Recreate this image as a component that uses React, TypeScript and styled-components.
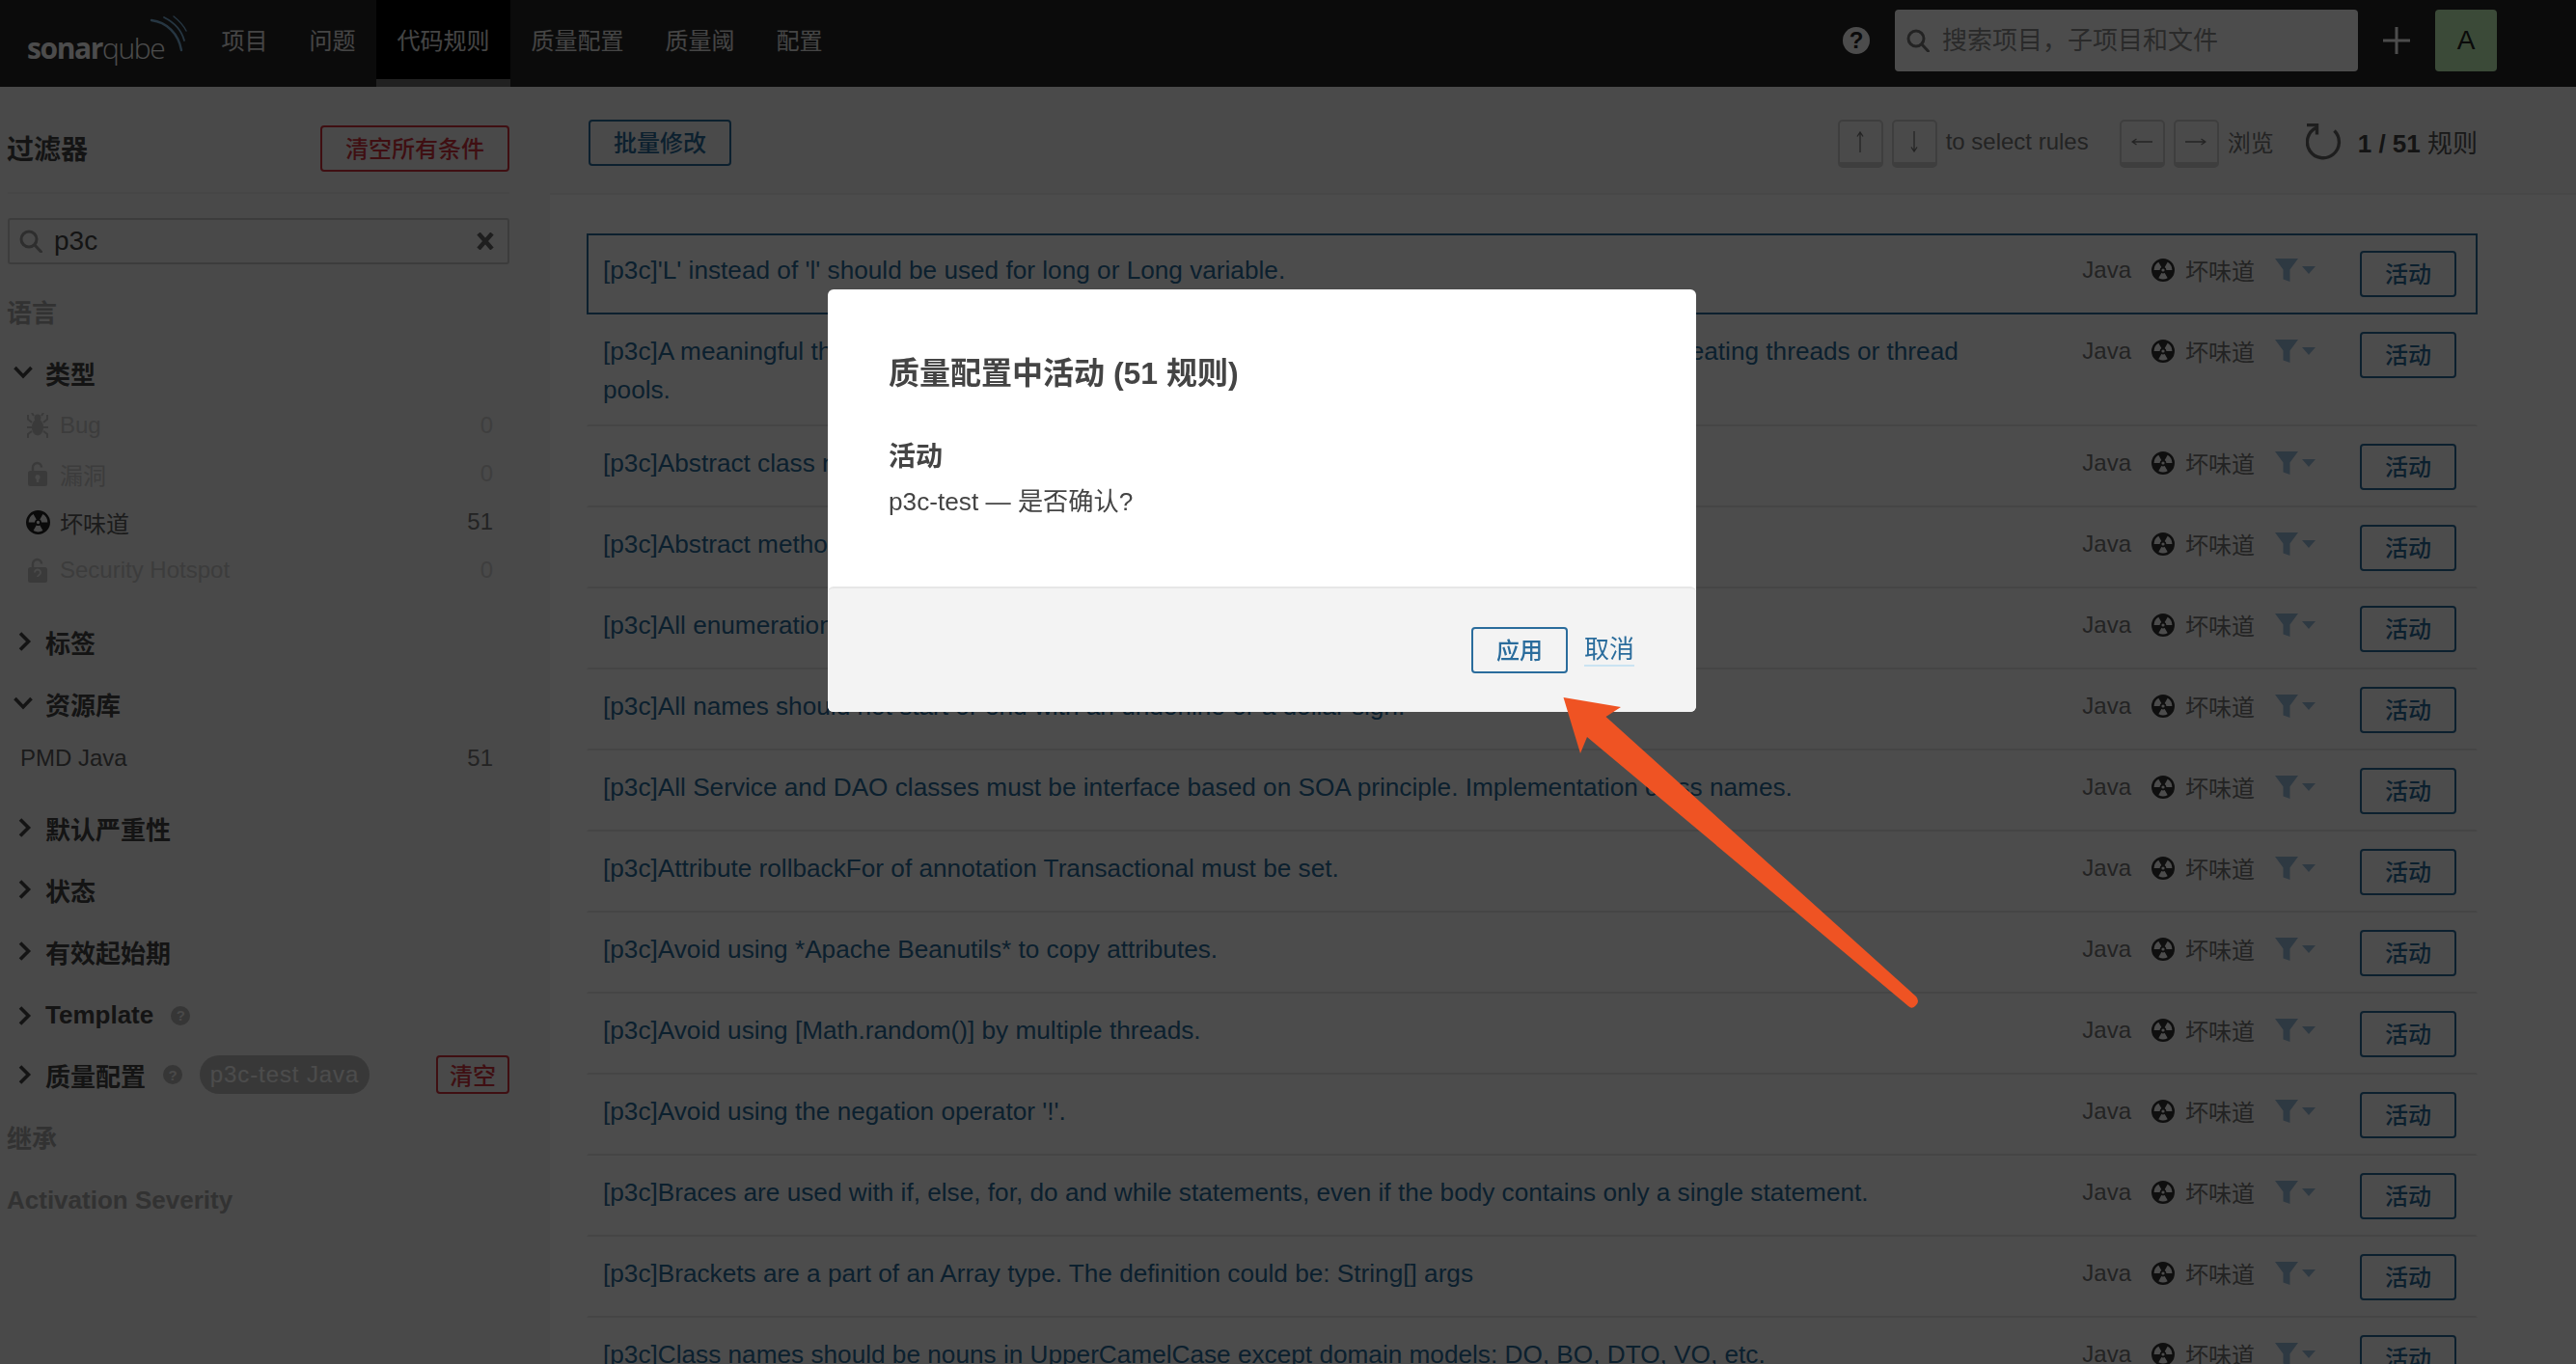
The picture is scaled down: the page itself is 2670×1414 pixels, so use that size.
import React from "react";
import styled, { createGlobalStyle } from "styled-components";

const FONT = `"Liberation Sans", "Noto Sans CJK SC", sans-serif`;
const BLUE = "#2a6c9c";

const GlobalStyle = createGlobalStyle`
  html, body { margin: 0; padding: 0; height: 100%; overflow: hidden; background: #fff; }
  body { font-family: ${FONT}; color: #444; }
  * { box-sizing: border-box; }
`;

const Page = styled.div`
  height: 1414px;
  overflow: hidden;
  display: flex;
  flex-direction: column;
`;

/* ---------- top bar ---------- */
const TopBar = styled.header`
  height: 90px;
  flex: none;
  display: flex;
  align-items: stretch;
  background: #262626;
  padding: 0 82px 0 28px;
`;
const Logo = styled.div`
  position: relative;
  width: 180px;
  display: flex;
  align-items: center;
  padding-top: 8px;
  font-family: "Open Sans", ${FONT};
  font-size: 30px;
  letter-spacing: -1.4px;
  color: #fff;
  b { font-weight: 700; }
  span { font-weight: 300; }
  svg { position: absolute; left: 124px; top: 14px; }
`;
const Nav = styled.nav`
  display: flex;
`;
const NavItem = styled.a<{ $active?: boolean }>`
  height: 90px;
  display: flex;
  align-items: center;
  padding: 0 21.5px 2px;
  font-size: 24px;
  color: #e6e6e6;
  background: ${(p) => (p.$active ? "#000" : "transparent")};
  border-bottom: 8px solid ${(p) => (p.$active ? "#707070" : "transparent")};
`;
const TopRight = styled.div`
  margin-left: auto;
  display: flex;
  align-items: center;
  padding-bottom: 6px;
`;
const HelpBig = styled.span`
  width: 28px;
  height: 28px;
  border-radius: 50%;
  background: #fff;
  color: #262626;
  font-size: 24px;
  font-weight: 700;
  display: flex;
  align-items: center;
  justify-content: center;
  margin-right: 26px;
`;
const GlobalSearch = styled.div`
  width: 480px;
  height: 64px;
  background: #fff;
  border-radius: 4px;
  display: flex;
  align-items: center;
  padding: 0 12px;
  gap: 13px;
  color: #777;
`;
const GlobalInput = styled.input`
  flex: 1;
  min-width: 0;
  border: 0;
  outline: 0;
  padding: 0;
  background: transparent;
  font: 26px ${FONT};
  &::placeholder { color: #8e8e8e; opacity: 1; }
`;
const PlusButton = styled.div`
  margin: 0 26px;
  display: flex;
  color: #fff;
`;
const Avatar = styled.div`
  width: 64px;
  height: 64px;
  border-radius: 4px;
  background: #c5f7bb;
  color: #222;
  font-size: 28px;
  display: flex;
  align-items: center;
  justify-content: center;
`;

/* ---------- body ---------- */
const Body = styled.div`
  flex: 1;
  display: flex;
  min-height: 0;
`;
const Sidebar = styled.aside`
  width: 570px;
  flex: none;
  background: #f3f3f3;
  padding: 0 42px 0 8px;
`;
const FilterHead = styled.div`
  height: 111px;
  display: flex;
  align-items: center;
  justify-content: space-between;
  border-bottom: 2px solid #ececec;
  padding-top: 18px;
`;
const FilterTitle = styled.h2`
  margin: 0 0 2px -1px;
  font-size: 28px;
  font-weight: 700;
  color: #444;
`;
const OutlineButton = styled.button<{ $color?: string; $w?: number; $h?: number }>`
  width: ${(p) => p.$w ?? 100}px;
  height: ${(p) => p.$h ?? 48}px;
  padding: 0 0 3px;
  flex: none;
  background: transparent;
  border: 2px solid ${(p) => p.$color ?? BLUE};
  border-radius: 4px;
  color: ${(p) => p.$color ?? BLUE};
  font: 500 24px ${FONT};
`;
const FilterSearch = styled.div`
  margin-top: 25px;
  height: 48px;
  border: 2px solid #c8c8c8;
  border-radius: 3px;
  display: flex;
  align-items: center;
  padding: 0 14px 0 10px;
  gap: 12px;
  color: #999;
`;
const FilterInput = styled.input`
  flex: 1;
  min-width: 0;
  border: 0;
  outline: 0;
  padding: 0;
  background: transparent;
  color: #444;
  font: 28px ${FONT};
`;
const Facets = styled.div`
  margin-top: 29px;
  display: flex;
  flex-direction: column;
  gap: 24px;
`;
const FacetHead = styled.div<{ $muted?: boolean; $latin?: boolean }>`
  height: 40px;
  display: flex;
  align-items: center;
  padding: ${(p) => (p.$latin ? "3px 0 0" : "0 0 2px")};
  margin-left: ${(p) => (p.$muted ? -1 : 0)}px;
  font-size: 26px;
  font-weight: 700;
  color: ${(p) => (p.$muted ? "#a8a8a8" : "#444")};
`;
const Chevron = styled.span`
  width: 39px;
  flex: none;
  display: flex;
  padding-left: 6px;
  color: #444;
`;
const FacetList = styled.div<{ $gap?: number }>`
  margin: ${(p) => p.$gap ?? 9}px 0 ${(p) => 15 - (p.$gap ?? 9)}px;
`;
const FacetRow = styled.div<{ $off?: boolean; $plain?: boolean }>`
  height: 50px;
  display: flex;
  align-items: center;
  padding: 0 17px 0 ${(p) => (p.$plain ? 13 : 18)}px;
  font-size: 24px;
  color: #5c5c5c;
  opacity: ${(p) => (p.$off ? 0.28 : 1)};
`;
const RowIcon = styled.span`
  width: 26px;
  margin-right: 10px;
  display: flex;
  justify-content: center;
  color: #333;
`;
const RowCount = styled.span`
  margin-left: auto;
  color: #777;
`;
const HelpDot = styled.span<{ $gap: number }>`
  width: 20px;
  height: 20px;
  margin-left: ${(p) => p.$gap}px;
  border-radius: 50%;
  background: #b4b4b4;
  color: #f3f3f3;
  font-size: 15px;
  font-weight: 700;
  display: flex;
  align-items: center;
  justify-content: center;
`;
const ProfileChip = styled.span`
  margin-left: 18px;
  height: 40px;
  width: 176px;
  border-radius: 20px;
  background: #bdbdbd;
  color: #fff;
  font-size: 24px;
  font-weight: 400;
  letter-spacing: 0.9px;
  display: flex;
  align-items: center;
  justify-content: center;
`;
const Spacer = styled.span`
  flex: 1;
`;

/* ---------- main column ---------- */
const Main = styled.main`
  flex: 1;
  min-width: 0;
  background: #fff;
`;
const Toolbar = styled.div`
  height: 112px;
  display: flex;
  align-items: center;
  background: #f7f7f7;
  border-bottom: 2px solid #ededed;
  padding: 6px 102px 0 40px;
`;
const ToolbarRight = styled.div`
  margin-left: auto;
  display: flex;
  align-items: center;
  font-size: 24px;
  color: #777;
  padding-bottom: 3px;
`;
const KeyCap = styled.span`
  width: 47px;
  height: 50px;
  margin: 5px 9px 0 0;
  border: 2px solid #cfcfcf;
  border-bottom-width: 6px;
  border-radius: 5px;
  background: #f7f7f7;
  color: #777;
  display: flex;
  align-items: center;
  justify-content: center;
`;
const Hint = styled.span<{ $gap: number }>`
  margin-right: ${(p) => p.$gap}px;
`;
const Counter = styled.span`
  margin-left: 16px;
  font-size: 26px;
  color: #555;
  b { font-weight: 700; color: #444; }
`;
const RuleList = styled.div`
  padding: 40px 102px 0 38px;
`;
const RuleRow = styled.div<{ $selected?: boolean }>`
  display: flex;
  align-items: flex-start;
  padding: 16px 20px 16px 15px;
  border: 2px solid ${(p) => (p.$selected ? BLUE : "transparent")};
  border-bottom-color: ${(p) => (p.$selected ? BLUE : "#e6e6e6")};
`;
const RuleTitle = styled.a`
  display: block;
  width: 1440px;
  flex: none;
  font-size: 26.2px;
  line-height: 40px;
  color: ${BLUE};
`;
const RuleMeta = styled.div`
  margin-left: auto;
  height: 40px;
  display: flex;
  align-items: center;
  font-size: 24px;
  color: #777;
`;
const Lang = styled.span`
  margin-right: 21px;
`;
const Kind = styled.span`
  margin: 0 21px 0 11px;
  padding-bottom: 2px;
`;
const FilterBtn = styled.span`
  display: flex;
  margin-right: 46px;
  color: #9cc0de;
`;

/* ---------- modal ---------- */
const Overlay = styled.div`
  position: fixed;
  inset: 0;
  background: rgba(0, 0, 0, 0.7);
  padding: 300px 0 0 858px;
`;
const Dialog = styled.div`
  width: 900px;
  height: 438px;
  background: #fff;
  border-radius: 6px;
  display: flex;
  flex-direction: column;
  overflow: hidden;
`;
const DialogBody = styled.div`
  flex: 1;
  padding: 64px 63px 0;
`;
const DialogTitle = styled.h2`
  margin: 0;
  font-size: 32px;
  line-height: 46px;
  font-weight: 700;
  color: #444;
`;
const DialogHeading = styled.h3`
  margin: 44px 0 0;
  font-size: 28px;
  line-height: 40px;
  font-weight: 700;
  color: #444;
`;
const DialogText = styled.p`
  margin: 6px 0 0;
  font-size: 26.2px;
  line-height: 40px;
  color: #444;
`;
const DialogFooter = styled.div`
  height: 130px;
  flex: none;
  background: #f3f3f3;
  border-top: 2px solid #e6e6e6;
  border-radius: 6px 6px 0 0;
  display: flex;
  justify-content: flex-end;
  align-items: flex-start;
  padding: 40px 64px 0 0;
`;
const CancelLink = styled.a`
  margin: 7px 0 0 17px;
  font-size: 26px;
  line-height: 32px;
  color: ${BLUE};
  border-bottom: 2px solid #cae3f2;
`;
const ArrowMark = styled.svg`
  position: fixed;
  left: 1610px;
  top: 715px;
`;

/* ---------- drawings ---------- */
function sector(cx: number, cy: number, r0: number, r1: number, mid: number, half: number) {
  const pt = (r: number, a: number) => {
    const t = (a * Math.PI) / 180;
    return `${(cx + r * Math.cos(t)).toFixed(2)} ${(cy + r * Math.sin(t)).toFixed(2)}`;
  };
  return `M${pt(r0, mid - half)}L${pt(r1, mid - half)}A${r1} ${r1} 0 0 1 ${pt(r1, mid + half)}L${pt(r0, mid + half)}A${r0} ${r0} 0 0 0 ${pt(r0, mid - half)}Z`;
}

const SmellIcon = ({ size = 24, color = "#333" }: { size?: number; color?: string }) => (
  <svg width={size} height={size} viewBox="0 0 24 24">
    <path
      fill={color}
      fillRule="evenodd"
      d={`M12 0a12 12 0 1 0 0 24a12 12 0 1 0 0-24Z M12 10.4a1.6 1.6 0 1 0 0 3.2a1.6 1.6 0 1 0 0-3.2Z ${sector(12, 12, 3.4, 9.4, -150, 30)} ${sector(12, 12, 3.4, 9.4, -30, 30)} ${sector(12, 12, 3.4, 9.4, 90, 30)}`}
    />
  </svg>
);

const BugIcon = () => (
  <svg width="22" height="26" viewBox="0 0 22 26" fill="none" stroke="#444" strokeWidth="2">
    <circle cx="11" cy="5" r="3.5" fill="#444" stroke="none" />
    <ellipse cx="11" cy="15" rx="6" ry="8.500" fill="#444" stroke="none" />
    <path d="M5 10L1 6.500V2M17 10l4-3.500V2M5 15H0M17 15h5M5 19l-4 3v4M17 19l4 3v4M7 3L5 0M15 3l2-3" />
  </svg>
);

const LockIcon = ({ question }: { question?: boolean }) => (
  <svg width="20" height="26" viewBox="0 0 20 26">
    <path d="M5 12V6.500a4.500 4.500 0 0 1 9 0" fill="none" stroke="#444" strokeWidth="2.400" />
    <rect x="0" y="10" width="20" height="16" rx="2.500" fill="#444" />
    {question ? (
      <path d="M7 15.500a3 3 0 1 1 4.600 2.500c-1 .7-1.600 1-1.600 2" fill="none" stroke="#f3f3f3" strokeWidth="2" />
    ) : (
      <path d="M10 14a2.600 2.600 0 0 1 1.200 4.900V22H8.800V18.900A2.600 2.600 0 0 1 10 14Z" fill="#f3f3f3" />
    )}
  </svg>
);

const SearchGlass = ({ size }: { size: number }) => (
  <svg width={size} height={size} viewBox="0 0 24 24" fill="none" stroke="currentColor" strokeWidth="3">
    <circle cx="10" cy="10" r="8" />
    <path d="M16 16l6.500 7" strokeLinecap="round" />
  </svg>
);

const ChevronRight = () => (
  <svg width="24" height="20" viewBox="0 0 24 20" fill="none" stroke="currentColor" strokeWidth="3.600">
    <path d="M7 1.500l8.500 8.500L7 18.500" />
  </svg>
);

const ChevronDown = () => (
  <svg width="20" height="14" viewBox="0 0 20 14" fill="none" stroke="currentColor" strokeWidth="3.600">
    <path d="M1.500 2l8.500 9 8.500-9" />
  </svg>
);

const Funnel = () => (
  <svg width="42" height="24" viewBox="0 0 42 24" fill="currentColor">
    <path d="M0 0h24L15.500 11.500V24l-7-2.500v-10Z" />
    <path d="M28 8h14l-7 8Z" />
  </svg>
);

const Reload = () => (
  <svg width="38" height="38" viewBox="0 0 38 38" fill="none" stroke="#666" strokeWidth="3.400">
    <path d="M10.500 4.500a16.500 16.500 0 1 0 19 3" />
    <path d="M1 1.500h10.500v10" />
  </svg>
);

const SonarWaves = () => (
  <svg width="48" height="44" viewBox="0 0 48 44" fill="none" stroke="#7fb4dc" strokeLinecap="round">
    <path d="M5 7C21 9 33 21 36 38" strokeWidth="2.400" />
    <path d="M18 4C28 9 36 17 39 28" strokeWidth="1.800" />
    <path d="M28 3C33 7 38 12 41 18" strokeWidth="1.400" />
  </svg>
);

const KeyArrow = ({ rotate }: { rotate: number }) => (
  <svg width="22" height="22" viewBox="0 0 22 22" fill="none" stroke="currentColor" strokeWidth="1.300" transform={`rotate(${rotate})`}>
    <path d="M11 22V1M8 5.500L11 1l3 4.500" />
  </svg>
);

const rules: string[] = [
  "[p3c]'L' instead of 'l' should be used for long or Long variable.",
  "[p3c]A meaningful thread name is helpful to trace the error, so assign a meaningful name when creating threads or thread pools.",
  "[p3c]Abstract class names must start with Abstract or Base.",
  "[p3c]Abstract methods should be commented by Javadoc.",
  "[p3c]All enumeration type fields should be commented as Javadoc style.",
  "[p3c]All names should not start or end with an underline or a dollar sign.",
  "[p3c]All Service and DAO classes must be interface based on SOA principle. Implementation class names.",
  "[p3c]Attribute rollbackFor of annotation Transactional must be set.",
  "[p3c]Avoid using *Apache Beanutils* to copy attributes.",
  "[p3c]Avoid using [Math.random()] by multiple threads.",
  "[p3c]Avoid using the negation operator '!'.",
  "[p3c]Braces are used with if, else, for, do and while statements, even if the body contains only a single statement.",
  "[p3c]Brackets are a part of an Array type. The definition could be: String[] args",
  "[p3c]Class names should be nouns in UpperCamelCase except domain models: DO, BO, DTO, VO, etc.",
];

const navItems = ["项目", "问题", "代码规则", "质量配置", "质量阈", "配置"];

export default function App() {
  return (
    <Page>
      <GlobalStyle />
      <TopBar>
        <Logo>
          <b>sonar</b>
          <span>qube</span>
          <SonarWaves />
        </Logo>
        <Nav>
          {navItems.map((n) => (
            <NavItem key={n} $active={n === "代码规则"}>
              {n}
            </NavItem>
          ))}
        </Nav>
        <TopRight>
          <HelpBig>?</HelpBig>
          <GlobalSearch>
            <SearchGlass size={24} />
            <GlobalInput placeholder="搜索项目，子项目和文件" />
          </GlobalSearch>
          <PlusButton>
            <svg width="28" height="28" viewBox="0 0 28 28" stroke="currentColor" strokeWidth="3">
              <path d="M14 0v28M0 14h28" />
            </svg>
          </PlusButton>
          <Avatar>A</Avatar>
        </TopRight>
      </TopBar>

      <Body>
        <Sidebar>
          <FilterHead>
            <FilterTitle>过滤器</FilterTitle>
            <OutlineButton $color="#d4333f" $w={196}>
              清空所有条件
            </OutlineButton>
          </FilterHead>
          <FilterSearch>
            <SearchGlass size={24} />
            <FilterInput readOnly value="p3c" />
            <svg width="18" height="18" viewBox="0 0 18 18" stroke="#666" strokeWidth="4.500">
              <path d="M2 1l14 16M16 1L2 17" />
            </svg>
          </FilterSearch>
          <Facets>
            <FacetHead $muted>语言</FacetHead>
            <div>
              <FacetHead>
                <Chevron>
                  <ChevronDown />
                </Chevron>
                类型
              </FacetHead>
              <FacetList>
                <FacetRow $off>
                  <RowIcon>
                    <BugIcon />
                  </RowIcon>
                  Bug
                  <RowCount>0</RowCount>
                </FacetRow>
                <FacetRow $off>
                  <RowIcon>
                    <LockIcon />
                  </RowIcon>
                  漏洞
                  <RowCount>0</RowCount>
                </FacetRow>
                <FacetRow>
                  <RowIcon>
                    <SmellIcon size={25} color="#222" />
                  </RowIcon>
                  坏味道
                  <RowCount>51</RowCount>
                </FacetRow>
                <FacetRow $off>
                  <RowIcon>
                    <LockIcon question />
                  </RowIcon>
                  Security Hotspot
                  <RowCount>0</RowCount>
                </FacetRow>
              </FacetList>
            </div>
            <FacetHead>
              <Chevron>
                <ChevronRight />
              </Chevron>
              标签
            </FacetHead>
            <div>
              <FacetHead>
                <Chevron>
                  <ChevronDown />
                </Chevron>
                资源库
              </FacetHead>
              <FacetList $gap={11}>
                <FacetRow $plain>
                  PMD Java
                  <RowCount>51</RowCount>
                </FacetRow>
              </FacetList>
            </div>
            {["默认严重性", "状态", "有效起始期"].map((t) => (
              <FacetHead key={t}>
                <Chevron>
                  <ChevronRight />
                </Chevron>
                {t}
              </FacetHead>
            ))}
            <FacetHead $latin>
              <Chevron>
                <ChevronRight />
              </Chevron>
              Template
              <HelpDot $gap={18}>?</HelpDot>
            </FacetHead>
            <FacetHead>
              <Chevron>
                <ChevronRight />
              </Chevron>
              质量配置
              <HelpDot $gap={18}>?</HelpDot>
              <ProfileChip>p3c-test Java</ProfileChip>
              <Spacer />
              <OutlineButton $color="#d4333f" $w={76} $h={40}>
                清空
              </OutlineButton>
            </FacetHead>
            <FacetHead $muted>继承</FacetHead>
            <FacetHead $muted $latin>
              Activation Severity
            </FacetHead>
          </Facets>
        </Sidebar>

        <Main>
          <Toolbar>
            <OutlineButton $w={148}>批量修改</OutlineButton>
            <ToolbarRight>
              <KeyCap>
                <KeyArrow rotate={0} />
              </KeyCap>
              <KeyCap>
                <KeyArrow rotate={180} />
              </KeyCap>
              <Hint $gap={32}>to select rules</Hint>
              <KeyCap>
                <KeyArrow rotate={-90} />
              </KeyCap>
              <KeyCap>
                <KeyArrow rotate={90} />
              </KeyCap>
              <Hint $gap={33}>浏览</Hint>
              <Reload />
              <Counter>
                <b>1 / 51</b> 规则
              </Counter>
            </ToolbarRight>
          </Toolbar>
          <RuleList>
            {rules.map((r, i) => (
              <RuleRow key={r} $selected={i === 0}>
                <RuleTitle>{r}</RuleTitle>
                <RuleMeta>
                  <Lang>Java</Lang>
                  <SmellIcon />
                  <Kind>坏味道</Kind>
                  <FilterBtn>
                    <Funnel />
                  </FilterBtn>
                </RuleMeta>
                <OutlineButton>活动</OutlineButton>
              </RuleRow>
            ))}
          </RuleList>
        </Main>
      </Body>

      <Overlay>
        <Dialog>
          <DialogBody>
            <DialogTitle>质量配置中活动 (51 规则)</DialogTitle>
            <DialogHeading>活动</DialogHeading>
            <DialogText>p3c-test — 是否确认?</DialogText>
          </DialogBody>
          <DialogFooter>
            <OutlineButton>应用</OutlineButton>
            <CancelLink>取消</CancelLink>
          </DialogFooter>
        </Dialog>
      </Overlay>
      <ArrowMark width="385" height="335" viewBox="1610 715 385 335">
        <path
          fill="#ef5323"
          d="M1620.500 723L1680 733L1664.500 743L1986 1033Q1990 1038 1986 1042Q1982 1047 1978 1043L1645 764L1638 781Z"
        />
      </ArrowMark>
    </Page>
  );
}
